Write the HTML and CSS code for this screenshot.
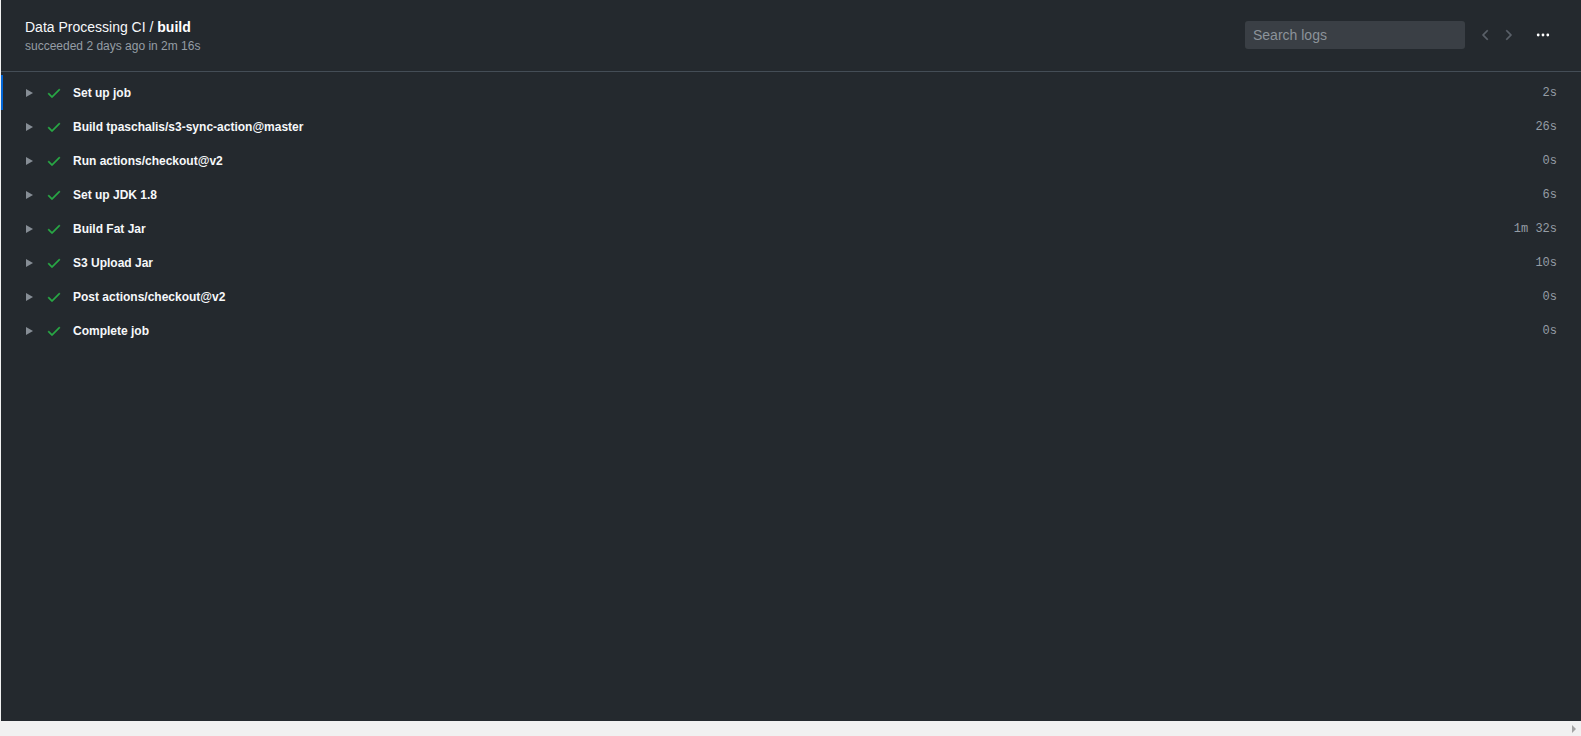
FILE: index.html
```html
<!DOCTYPE html>
<html>
<head>
<meta charset="utf-8">
<link rel="stylesheet" href="styles.css">
</head>
<body>
<div class="page">
  <div class="panel">
    <header class="head">
      <div class="titles">
        <div class="title">Data Processing CI / <b>build</b></div>
        <div class="sub">succeeded 2 days ago in 2m 16s</div>
      </div>
      <div class="tools">
        <input class="search" type="text" placeholder="Search logs">
        <button class="nav prev"><svg width="16" height="16" viewBox="0 0 16 16"><path d="M9.78 12.78a.75.75 0 01-1.06 0L4.47 8.53a.75.75 0 010-1.06l4.25-4.25a.75.75 0 011.06 1.06L6.06 8l3.72 3.72a.75.75 0 010 1.06z" fill="currentColor"/></svg></button>
        <button class="nav next"><svg width="16" height="16" viewBox="0 0 16 16"><path d="M6.22 3.22a.75.75 0 011.06 0l4.25 4.25a.75.75 0 010 1.06l-4.25 4.25a.75.75 0 01-1.06-1.06L9.94 8 6.22 4.28a.75.75 0 010-1.06z" fill="currentColor"/></svg></button>
        <button class="more"><svg width="14" height="14" viewBox="0 0 16 16"><circle cx="2.5" cy="8" r="1.6" fill="currentColor"/><circle cx="8" cy="8" r="1.6" fill="currentColor"/><circle cx="13.5" cy="8" r="1.6" fill="currentColor"/></svg></button>
      </div>
    </header>
    <div class="steps">
      <div class="step active"><span class="tri"></span><svg class="check" width="16" height="16" viewBox="0 0 16 16"><path d="M13.78 4.22a.75.75 0 010 1.06l-7.25 7.25a.75.75 0 01-1.06 0L2.22 9.28a.75.75 0 011.06-1.06L6 10.94l6.72-6.72a.75.75 0 011.06 0z" fill="currentColor"/></svg><span class="name">Set up job</span><span class="dur">2s</span></div>
      <div class="step"><span class="tri"></span><svg class="check" width="16" height="16" viewBox="0 0 16 16"><path d="M13.78 4.22a.75.75 0 010 1.06l-7.25 7.25a.75.75 0 01-1.06 0L2.22 9.28a.75.75 0 011.06-1.06L6 10.94l6.72-6.72a.75.75 0 011.06 0z" fill="currentColor"/></svg><span class="name">Build tpaschalis/s3-sync-action@master</span><span class="dur">26s</span></div>
      <div class="step"><span class="tri"></span><svg class="check" width="16" height="16" viewBox="0 0 16 16"><path d="M13.78 4.22a.75.75 0 010 1.06l-7.25 7.25a.75.75 0 01-1.06 0L2.22 9.28a.75.75 0 011.06-1.06L6 10.94l6.72-6.72a.75.75 0 011.06 0z" fill="currentColor"/></svg><span class="name">Run actions/checkout@v2</span><span class="dur">0s</span></div>
      <div class="step"><span class="tri"></span><svg class="check" width="16" height="16" viewBox="0 0 16 16"><path d="M13.78 4.22a.75.75 0 010 1.06l-7.25 7.25a.75.75 0 01-1.06 0L2.22 9.28a.75.75 0 011.06-1.06L6 10.94l6.72-6.72a.75.75 0 011.06 0z" fill="currentColor"/></svg><span class="name">Set up JDK 1.8</span><span class="dur">6s</span></div>
      <div class="step"><span class="tri"></span><svg class="check" width="16" height="16" viewBox="0 0 16 16"><path d="M13.78 4.22a.75.75 0 010 1.06l-7.25 7.25a.75.75 0 01-1.06 0L2.22 9.28a.75.75 0 011.06-1.06L6 10.94l6.72-6.72a.75.75 0 011.06 0z" fill="currentColor"/></svg><span class="name">Build Fat Jar</span><span class="dur">1m 32s</span></div>
      <div class="step"><span class="tri"></span><svg class="check" width="16" height="16" viewBox="0 0 16 16"><path d="M13.78 4.22a.75.75 0 010 1.06l-7.25 7.25a.75.75 0 01-1.06 0L2.22 9.28a.75.75 0 011.06-1.06L6 10.94l6.72-6.72a.75.75 0 011.06 0z" fill="currentColor"/></svg><span class="name">S3 Upload Jar</span><span class="dur">10s</span></div>
      <div class="step"><span class="tri"></span><svg class="check" width="16" height="16" viewBox="0 0 16 16"><path d="M13.78 4.22a.75.75 0 010 1.06l-7.25 7.25a.75.75 0 01-1.06 0L2.22 9.28a.75.75 0 011.06-1.06L6 10.94l6.72-6.72a.75.75 0 011.06 0z" fill="currentColor"/></svg><span class="name">Post actions/checkout@v2</span><span class="dur">0s</span></div>
      <div class="step"><span class="tri"></span><svg class="check" width="16" height="16" viewBox="0 0 16 16"><path d="M13.78 4.22a.75.75 0 010 1.06l-7.25 7.25a.75.75 0 01-1.06 0L2.22 9.28a.75.75 0 011.06-1.06L6 10.94l6.72-6.72a.75.75 0 011.06 0z" fill="currentColor"/></svg><span class="name">Complete job</span><span class="dur">0s</span></div>
    </div>
  </div>
  <div class="hscroll"><span class="arrow"></span></div>
</div>
</body>
</html>
```

FILE: styles.css
```css
html, body {
  margin: 0;
  padding: 0;
  height: 100%;
  overflow: hidden;
}
body {
  background: #f1f1f1;
  font-family: "Liberation Sans", Arial, sans-serif;
}
.page {
  display: flex;
  flex-direction: column;
  height: 736px;
}
.panel {
  height: 721px;
  margin-left: 1px;
  background: #24292e;
  display: flex;
  flex-direction: column;
}
.head {
  display: flex;
  align-items: center;
  justify-content: space-between;
  box-sizing: border-box;
  height: 72px;
  padding: 0 24px 1px 24px;
  border-bottom: 1px solid #444d56;
  flex: none;
}
.titles {
  display: flex;
  flex-direction: column;
  padding-top: 2px;
}
.title {
  font-size: 14px;
  line-height: 20px;
  color: #f6f8fa;
}
.title b {
  font-weight: bold;
  color: #fff;
}
.sub {
  font-size: 12px;
  line-height: 18px;
  color: #959da5;
}
.tools {
  display: flex;
  align-items: center;
}
.search {
  width: 220px;
  height: 28px;
  box-sizing: border-box;
  border: none;
  border-radius: 3px;
  background: #3a3f45;
  color: #fff;
  font-family: "Liberation Sans", Arial, sans-serif;
  font-size: 14px;
  padding: 0 8px;
  outline: none;
}
.search::placeholder {
  color: #8c939a;
}
.nav, .more {
  background: none;
  border: none;
  padding: 0;
  display: flex;
  align-items: center;
  justify-content: center;
  cursor: pointer;
}
.nav {
  width: 16px;
  height: 28px;
  color: #5a6068;
}
.nav path {
  stroke: currentColor;
  stroke-width: 0.3;
}
.prev {
  margin-left: 13px;
}
.next {
  margin-left: 6px;
}
.more {
  width: 28px;
  height: 28px;
  color: #fff;
  margin-left: 13px;
}
.steps {
  padding-top: 4px;
  display: flex;
  flex-direction: column;
}
.step {
  display: flex;
  align-items: center;
  height: 34px;
  padding: 0 24px 0 25px;
  position: relative;
}
.step.active::before {
  content: "";
  position: absolute;
  left: 0;
  top: -1px;
  width: 2px;
  height: 35px;
  background: #0366d6;
}
.tri {
  width: 0;
  height: 0;
  border-top: 4px solid transparent;
  border-bottom: 4px solid transparent;
  border-left: 7px solid #868d95;
  margin-right: 13px;
}
.check {
  color: #28a745;
  flex: none;
}
.check path {
  stroke: currentColor;
  stroke-width: 0.4;
}
.name {
  margin-left: 11px;
  font-size: 12px;
  font-weight: bold;
  color: #f6f8fa;
  flex: 1;
}
.dur {
  font-family: "Liberation Mono", monospace;
  font-size: 12px;
  color: #959da5;
}
.hscroll {
  height: 15px;
  background: #f1f1f1;
  display: flex;
  align-items: center;
  justify-content: flex-end;
  padding-right: 5px;
}
.arrow {
  width: 0;
  height: 0;
  border-top: 4px solid transparent;
  border-bottom: 4px solid transparent;
  border-left: 4px solid #a3a3a3;
}
```
